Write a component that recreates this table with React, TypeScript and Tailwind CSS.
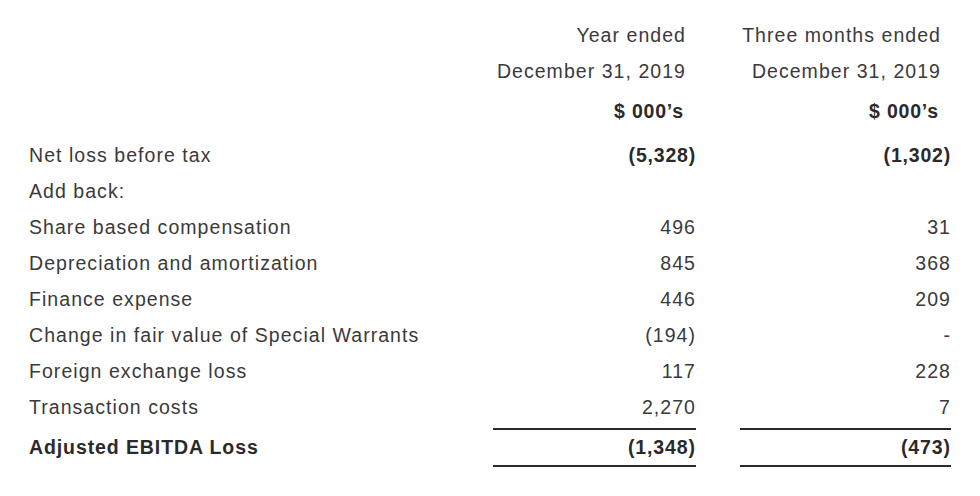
const rows: { label: string; year: string; quarter: string }[] = [
  { label: 'Add back:', year: '', quarter: '' },
  { label: 'Share based compensation', year: '496', quarter: '31' },
  { label: 'Depreciation and amortization', year: '845', quarter: '368' },
  { label: 'Finance expense', year: '446', quarter: '209' },
  { label: 'Change in fair value of Special Warrants', year: '(194)', quarter: '-' },
  { label: 'Foreign exchange loss', year: '117', quarter: '228' },
  { label: 'Transaction costs', year: '2,270', quarter: '7' },
]

function Row({ label, year, quarter, bold }: { label: string; year: string; quarter: string; bold?: boolean }) {
  const num = bold ? 'font-bold tracking-[0.8px] text-[#2a2a2a]' : ''
  return (
    <div className="flex h-[36px] items-center">
      <div className="flex-1">{label}</div>
      <div className={`w-[203px] text-right ${num}`}>{year}</div>
      <div className="w-[44px]" />
      <div className={`w-[211px] text-right ${num}`}>{quarter}</div>
    </div>
  )
}

export default function App() {
  return (
    <div className="h-[496px] w-[980px] bg-white pl-[29px] pr-[29px] pt-[18px] text-[#3a3a3a] text-[19.5px] tracking-[1.05px] font-['Liberation_Sans',Arial,sans-serif]">
      <div className="flex h-[36px] items-center">
        <div className="flex-1" />
        <div className="w-[203px] pr-[10px] text-right">Year ended</div>
        <div className="w-[44px]" />
        <div className="w-[211px] pr-[10px] text-right">Three months ended</div>
      </div>
      <div className="flex h-[36px] items-center">
        <div className="flex-1" />
        <div className="w-[203px] pr-[10px] text-right">December 31, 2019</div>
        <div className="w-[44px]" />
        <div className="w-[211px] pr-[10px] text-right">December 31, 2019</div>
      </div>
      <div className="mt-[4px] flex h-[36px] items-center font-bold tracking-[0.8px] text-[#2a2a2a]">
        <div className="flex-1" />
        <div className="w-[203px] pr-[12px] text-right">$ 000’s</div>
        <div className="w-[44px]" />
        <div className="w-[211px] pr-[12px] text-right">$ 000’s</div>
      </div>
      <div className="mt-[8px]">
        <Row label="Net loss before tax" year="(5,328)" quarter="(1,302)" bold />
        {rows.map((r) => (
          <Row key={r.label} label={r.label} year={r.year} quarter={r.quarter} />
        ))}
        <div className="mt-[2px] flex h-[39px] items-center font-bold tracking-[0.9px] text-[#2a2a2a]">
          <div className="flex-1">Adjusted EBITDA Loss</div>
          <div className="flex h-full w-[203px] items-center justify-end border-y-2 border-[#2a2a2a]">(1,348)</div>
          <div className="w-[44px]" />
          <div className="flex h-full w-[211px] items-center justify-end border-y-2 border-[#2a2a2a]">(473)</div>
        </div>
      </div>
    </div>
  )
}
